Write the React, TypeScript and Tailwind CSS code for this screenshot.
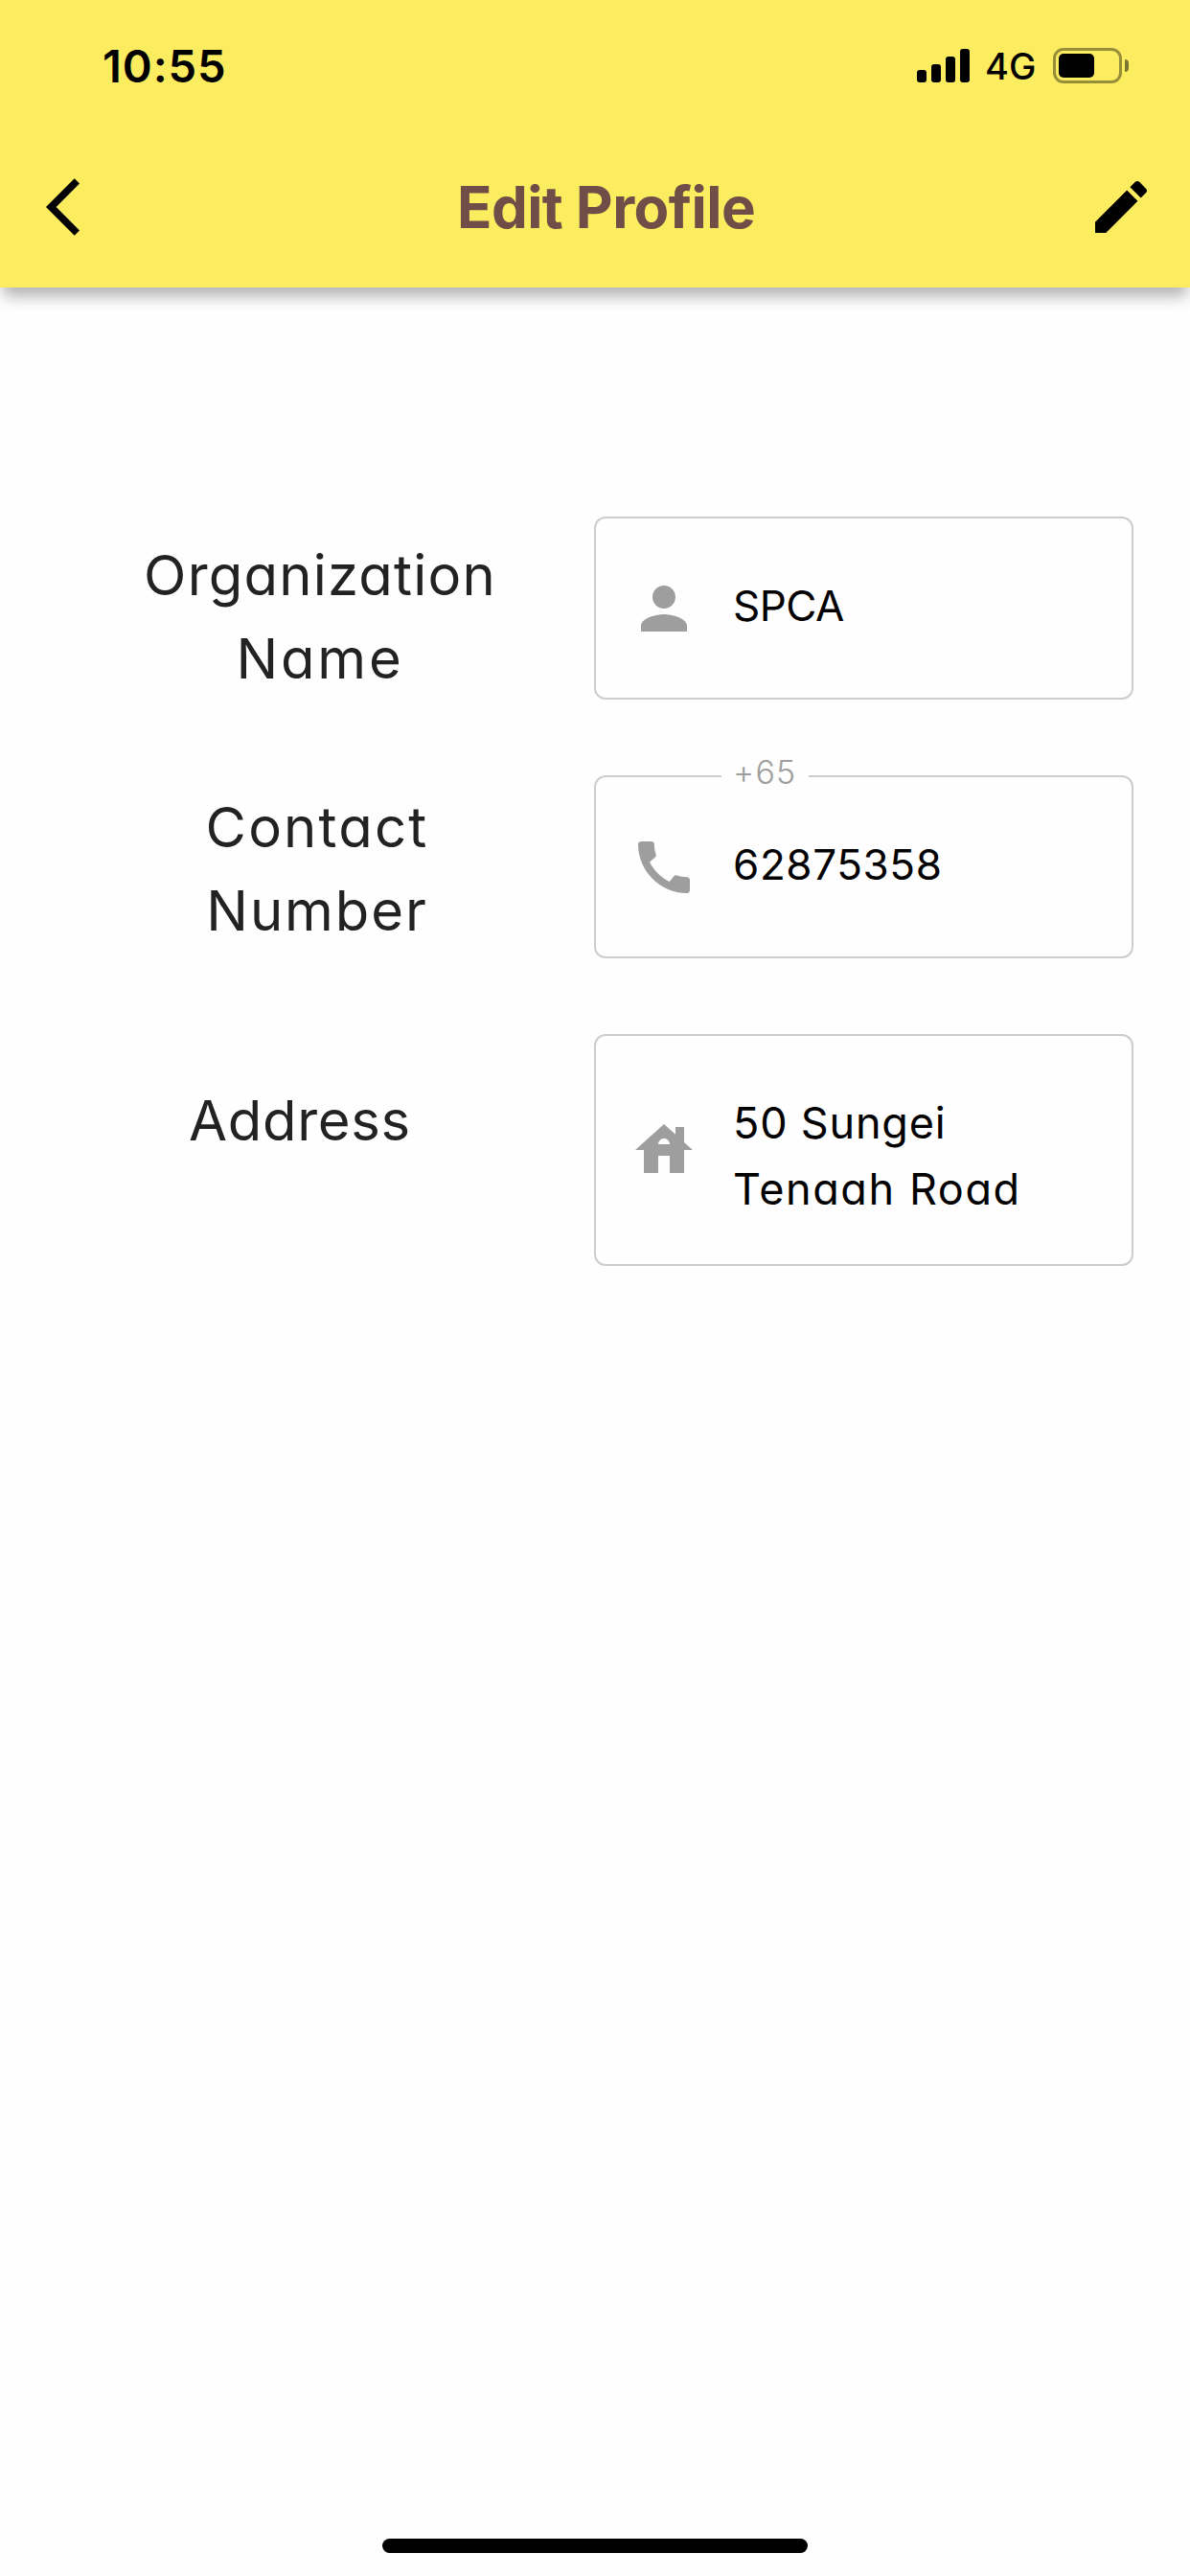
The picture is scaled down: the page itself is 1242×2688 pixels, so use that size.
import type { ReactNode } from "react";

function Icon({ d, className }: { d: string; className: string }) {
  return (
    <svg viewBox="0 0 24 24" className={`size-[72px] shrink-0 ${className}`} fill="currentColor" aria-hidden="true">
      <path d={d} />
    </svg>
  );
}

const BACK = "M11.67 3.87 9.9 2.1 0 12l9.9 9.9 1.77-1.77L3.54 12z";
const EDIT =
  "M3 17.25V21h3.75L17.81 9.94l-3.75-3.75L3 17.25zM20.71 7.04c.39-.39.39-1.02 0-1.41l-2.34-2.34c-.39-.39-1.02-.39-1.41 0l-1.83 1.83 3.75 3.75 1.83-1.83z";
const PERSON =
  "M12 12c2.21 0 4-1.79 4-4s-1.79-4-4-4-4 1.79-4 4 1.79 4 4 4zm0 2c-2.67 0-8 1.34-8 4v2h16v-2c0-2.66-5.33-4-8-4z";
const PHONE =
  "M20.01 15.38c-1.23 0-2.42-.2-3.53-.56-.35-.12-.74-.03-1.01.24l-1.57 1.97c-2.83-1.35-5.48-3.9-6.89-6.83l1.95-1.66c.27-.28.35-.67.24-1.02-.37-1.11-.56-2.3-.56-3.53 0-.54-.45-.99-.99-.99H4.19C3.65 3 3 3.24 3 3.99 3 13.28 10.73 21 20.01 21c.71 0 .99-.63.99-1.18v-3.45c0-.54-.45-.99-.99-.99z";
const HOUSE =
  "M19 9.3V4h-3v2.6L12 3 2 12h3v8h5v-6h4v6h5v-8h3l-3-2.7zM10 10c0-1.1.9-2 2-2s2 .9 2 2h-4z";

function StatusBar() {
  return (
    <div className="flex h-[136px] items-center pr-16 pl-[107px]">
      <span className="text-[47px] leading-none font-semibold tracking-[0.9px] text-black">10:55</span>
      <div className="ml-auto flex items-center">
        <div className="flex h-[35px] items-end gap-[5px]">
          <span className="h-[13px] w-2.5 rounded-[3px] bg-black" />
          <span className="h-[19px] w-2.5 rounded-[3px] bg-black" />
          <span className="h-[27px] w-2.5 rounded-[3px] bg-black" />
          <span className="h-[35px] w-2.5 rounded-[3px] bg-black" />
        </div>
        <span className="w-[87px] pt-0.5 pl-4 text-[38px] leading-none font-medium text-black">4G</span>
        <div className="flex items-center gap-[3px]">
          <div className="flex h-[37px] w-[72px] items-center rounded-[11px] border-3 border-[#978e3a] pl-[3px]">
            <span className="h-[25px] w-[37px] rounded-[5px] bg-black" />
          </div>
          <span className="h-[13px] w-1 rounded-r-full bg-[#7e7630]" />
        </div>
      </div>
    </div>
  );
}

function Row({ label, labelClass, children, height }: { label: ReactNode; labelClass: string; children: ReactNode; height: string }) {
  return (
    <div className={`flex items-start ${height}`}>
      <div className={`flex w-[620px] shrink-0 flex-col items-center text-[58px] leading-[87px] text-[#222222] ${labelClass}`}>
        {label}
      </div>
      <div className="relative flex h-full w-[563px] items-center rounded-xl border-2 border-[#cdcdcd] pl-[35px] text-[44px] leading-[69px] text-black">
        {children}
      </div>
    </div>
  );
}

export default function App() {
  return (
    <div className="flex h-[2688px] w-[1242px] flex-col bg-[#fefefe] font-['Inter',sans-serif] [font-feature-settings:'cv11']">
      <header className="h-[300px] shrink-0 bg-[#fcec60] shadow-[0_12px_15px_-3px_rgba(0,0,0,0.3)]">
        <StatusBar />
        <div className="flex h-40 items-center pr-9 pl-12">
          <Icon d={BACK} className="text-black" />
          <h1 className="ml-[357px] text-[60px] leading-none font-bold tracking-[-0.57px] text-[#6e4e46]">Edit Profile</h1>
          <Icon d={EDIT} className="ml-auto text-black" />
        </div>
      </header>

      <main className="flex grow flex-col gap-[79px] pt-[239px]">
        <Row
          height="h-[191px]"
          labelClass="pt-[18px] pl-12"
          label={
            <>
              <span className="tracking-[1.2px]">Organization</span>
              <span className="tracking-[2.8px]">Name</span>
            </>
          }
        >
          <Icon d={PERSON} className="text-[#9e9e9e]" />
          <span className="ml-9 pb-[5px] tracking-[-0.5px]">SPCA</span>
        </Row>
        <Row
          height="h-[191px]"
          labelClass="pt-[11px] pl-[42px]"
          label={
            <>
              <span className="tracking-[2.2px]">Contact</span>
              <span className="tracking-[1.9px]">Number</span>
            </>
          }
        >
          <span className="absolute -top-[25px] left-[131px] w-[91px] bg-[#fefefe] pl-3 text-[34px] leading-10 font-light tracking-[1.2px] text-[#9e9e9e]">
            +65
          </span>
          <Icon d={PHONE} className="text-[#9e9e9e]" />
          <span className="ml-9 pb-[5px] tracking-[0.6px]">62875358</span>
        </Row>
        <Row
          height="h-[242px]"
          labelClass="pt-[47px] pl-1.5"
          label={<span className="tracking-[0.7px]">Address</span>}
        >
          <Icon d={HOUSE} className="text-[#9e9e9e]" />
          <div className="ml-9 flex flex-col pt-3">
            <span className="text-[45px] tracking-[0.8px]">50 Sungei</span>
            <span className="text-[45px] tracking-[1.6px]">Tenaah Road</span>
          </div>
        </Row>
      </main>

      <div className="mx-auto mb-6 h-[15px] w-[444px] shrink-0 rounded-full bg-black" />
    </div>
  );
}
